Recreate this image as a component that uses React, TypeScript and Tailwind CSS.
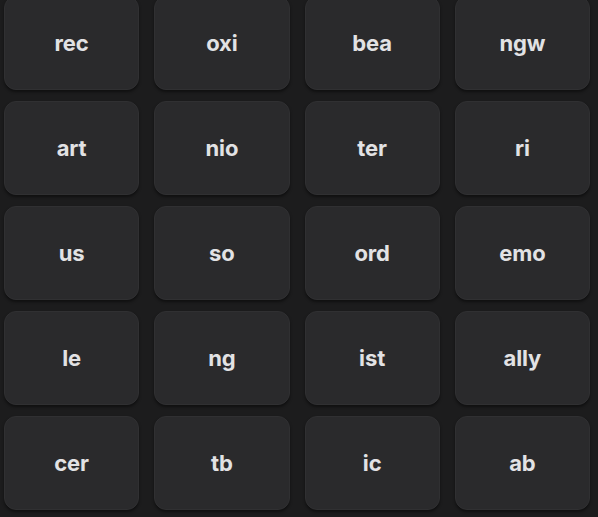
import React from 'react'

const keys = [
  'rec', 'oxi', 'bea', 'ngw',
  'art', 'nio', 'ter', 'ri',
  'us', 'so', 'ord', 'emo',
  'le', 'ng', 'ist', 'ally',
  'cer', 'tb', 'ic', 'ab',
]

export default function App() {
  return (
    <div className="h-[517px] w-[598px] overflow-hidden bg-[#1c1c1d]">
      <div className="-mt-[4px] grid grid-cols-4 gap-x-[15px] gap-y-[11px] pl-[4px] pr-[8px]">
        {keys.map((k) => (
          <div
            key={k}
            className="flex h-[94px] items-center justify-center rounded-[12px] border border-[#303032] bg-[#2a2a2c] shadow-[0_2px_3px_rgba(0,0,0,0.45)]"
          >
            <span
              className="text-[22px] font-bold tracking-[-0.1px] text-[#e2e2e4]"
              style={{ fontFamily: 'Inter, "Liberation Sans", sans-serif' }}
            >
              {k}
            </span>
          </div>
        ))}
      </div>
    </div>
  )
}
